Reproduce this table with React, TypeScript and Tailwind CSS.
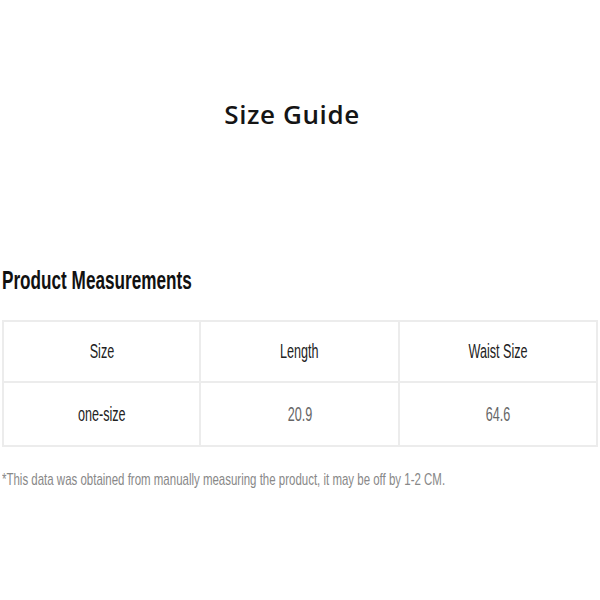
import React from "react";

const cond = "inline-block origin-center scale-x-[0.615] text-[20.5px]";

export default function App() {
  const arial = { fontFamily: '"Liberation Sans", Arial, sans-serif' };
  return (
    <div className="w-[600px] h-[600px] bg-white flex flex-col overflow-hidden">
      <div className="pt-[97px] pr-[16px] flex justify-center">
        <h1
          className="text-[26px] leading-[35px] font-semibold tracking-[0.6px] text-[#151515]"
          style={{ fontFamily: '"Open Sans", sans-serif' }}
        >
          Size Guide
        </h1>
      </div>
      <div className="mt-[131px] pl-[2px]" style={arial}>
        <div className="h-[34px] flex items-center">
          <span className="inline-block origin-left scale-x-[0.66] text-[26px] font-bold text-[#111] whitespace-nowrap">
            Product Measurements
          </span>
        </div>
        <div className="mt-[23px] w-[596px] border-2 border-[#ececec]">
          <div className="grid grid-cols-[197px_199px_1fr] h-[61px] border-b-2 border-[#ececec]">
            <div className="flex items-center justify-center border-r-2 border-[#ececec]">
              <span className={cond + " text-[#222]"}>Size</span>
            </div>
            <div className="flex items-center justify-center border-r-2 border-[#ececec]">
              <span className={cond + " text-[#222]"}>Length</span>
            </div>
            <div className="flex items-center justify-center">
              <span className={cond + " text-[#222]"}>Waist Size</span>
            </div>
          </div>
          <div className="grid grid-cols-[197px_199px_1fr] h-[62px]">
            <div className="flex items-center justify-center border-r-2 border-[#ececec]">
              <span className={cond + " text-[#222]"}>one-size</span>
            </div>
            <div className="flex items-center justify-center border-r-2 border-[#ececec]">
              <span className={cond + " text-[#666]"}>20.9</span>
            </div>
            <div className="flex items-center justify-center">
              <span className={cond + " text-[#666]"}>64.6</span>
            </div>
          </div>
        </div>
        <div className="mt-[21px] h-[24px] flex items-center">
          <span className="inline-block origin-left scale-x-[0.675] text-[17px] text-[#888] whitespace-nowrap">
            *This data was obtained from manually measuring the product, it may be off by 1-2 CM.
          </span>
        </div>
      </div>
    </div>
  );
}
